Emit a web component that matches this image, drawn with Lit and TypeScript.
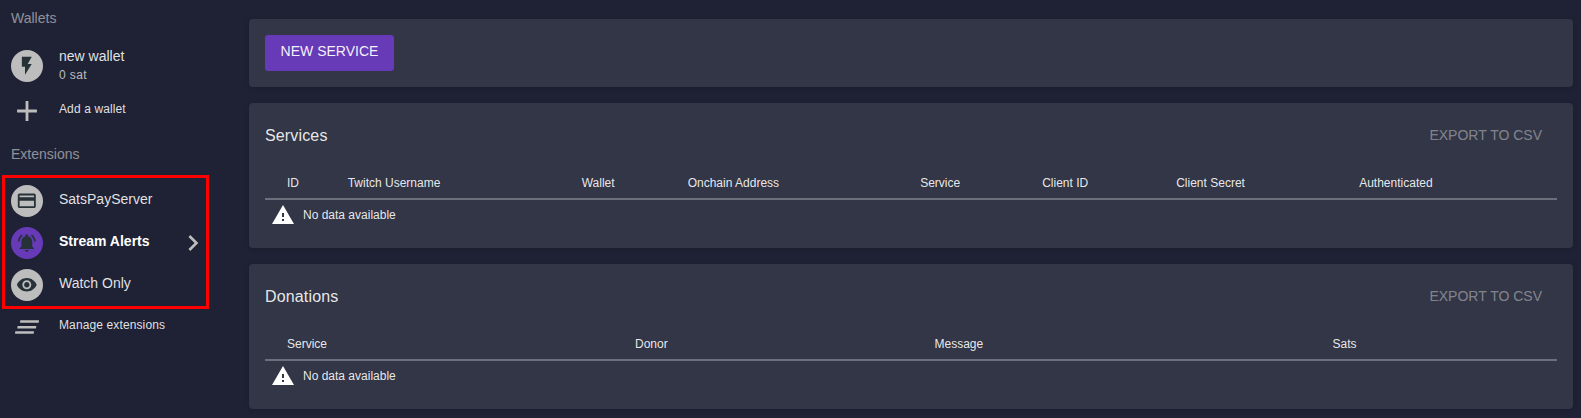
import { LitElement, html, css, svg } from "lit";
import { customElement } from "lit/decorators.js";

const P = {
  bolt: "M6.500 2v11h3.500v9l7.500-12h-4.500l4.500-8z",
  card: "M20 4H4c-1.11 0-1.99.89-1.99 2L2 18c0 1.11.89 2 2 2h16c1.11 0 2-.89 2-2V6c0-1.11-.89-2-2-2zm0 14H4v-6h16v6zm0-10H4V6h16v2z",
  bell: "M7.58 4.08L6.15 2.65C3.75 4.48 2.17 7.3 2.03 10.5h2c.15-2.65 1.51-4.97 3.55-6.42zm12.39 6.42h2c-.15-3.2-1.73-6.02-4.12-7.85l-1.42 1.43c2.02 1.45 3.39 3.77 3.54 6.42zM18 11c0-3.07-1.64-5.64-4.5-6.32V4c0-.83-.67-1.5-1.5-1.5s-1.5.67-1.5 1.5v.68C7.63 5.36 6 7.92 6 11v5l-2 2v1h16v-1l-2-2v-5zm-6 11c.14 0 .27-.01.4-.04.65-.14 1.18-.58 1.44-1.18.1-.24.15-.5.15-.78h-4c.01 1.1.9 2 2.01 2z",
  eye: "M12 4.5C7 4.5 2.73 7.61 1 12c1.73 4.39 6 7.5 11 7.5s9.27-3.11 11-7.5c-1.73-4.39-6-7.5-11-7.5zM12 17c-2.76 0-5-2.24-5-5s2.24-5 5-5 5 2.24 5 5-2.24 5-5 5zm0-8c-1.66 0-3 1.34-3 3s1.34 3 3 3 3-1.34 3-3-1.34-3-3-3z",
  warn: "M1 21h22L12 2 1 21zm12-3h-2v-2h2v2zm0-4h-2v-4h2v4z",
  chev: "M10 6L8.59 7.41 13.17 12l-4.58 4.59L10 18l6-6z",
  add: "M19 13h-6v6h-2v-6H5v-2h6V5h2v6h6v2z",
};
const icon = (d: string, cls = "") => html`<svg class="ic ${cls}" viewBox="0 0 24 24"><path d=${d}></path></svg>`;

@customElement("app-root")
export class AppRoot extends LitElement {
  static styles = css`
    :host { display: flex; width: 1581px; height: 418px; overflow: hidden; background: #1f2234; font-family: "Liberation Sans", Arial, sans-serif; color: #fff; }
    .side { width: 249px; flex: none; display: flex; flex-direction: column; }
    .label { height: 36px; padding-left: 11px; display: flex; align-items: center; font-size: 14px; color: rgba(255,255,255,.5); flex: none; }
    .row { height: 42px; flex: none; display: flex; align-items: center; position: relative; font-size: 14px; color: rgba(255,255,255,.88); }
    .wallet { height: 46px; margin-top: 7px; }
    .tool { height: 30px; font-size: 12px; letter-spacing: .12px; }
    .add { margin-top: 6px; }
    .add .lead { margin-top: 2px; }
    .add .lbl { margin-top: -2px; }
    .manage { margin-top: 1px; }
    .lead { width: 32px; height: 32px; margin-left: 11px; margin-right: 16px; flex: none; display: flex; align-items: center; justify-content: center; border-radius: 50%; background: #bdbdbd; }
    .lead.plain { background: none; }
    .lead.purple { background: #673ab7; }
    .ic { width: 21.6px; height: 21.6px; fill: #263238; display: block; }
    .stack { display: flex; flex-direction: column; padding-bottom: 2px; line-height: 21px; }
    .sub { font-size: 12px; color: rgba(255,255,255,.7); line-height: 17px; letter-spacing: .4px; }
    .t { margin-top: -4px; }
    .plus { width: 34px; height: 34px; fill: #bdbdbd; flex: none; display: block; }
    .bars { width: 26px; height: 26px; fill: #bdbdbd; display: block; flex: none; }
    .bold { font-weight: 700; color: #fff; }
    .chev { position: absolute; left: 172px; top: 5px; width: 32px; height: 32px; fill: #bdbdbd; }
    .ext { margin-top: 11px; }
    .box { width: 207px; box-sizing: border-box; margin: 3px 0 0 2px; border: 3px solid #f00; padding-top: 2px; flex: none; }
    .box .lead { margin-left: 6px; }
    .main { flex: 1; padding: 19px 8px 0 0; display: flex; flex-direction: column; gap: 16px; }
    .card { background: #333646; border-radius: 4px; box-shadow: 0 1px 5px rgba(0,0,0,.2); flex: none; }
    .top { height: 68px; box-sizing: border-box; padding: 16px; }
    .btn { width: 129px; height: 36px; padding: 0 0 4px; background: #673ab7; border: 0; border-radius: 3px; color: rgba(255,255,255,.95); font: 14px "Liberation Sans", Arial, sans-serif; display: flex; align-items: center; justify-content: center; }
    .panel { height: 145px; box-sizing: border-box; padding: 0 16px; }
    .head { height: 64px; display: flex; align-items: center; justify-content: space-between; }
    .title { font-size: 16px; color: rgba(255,255,255,.9); letter-spacing: .15px; margin-top: 2px; }
    .export { font-size: 14px; color: rgba(255,255,255,.4); margin-right: 15px; }
    .cols { display: grid; height: 31px; align-items: center; font-size: 12px; border-bottom: 2px solid #6d6f7c; padding-left: 22px; color: rgba(255,255,255,.9); }
    .cols span { margin-top: 1px; }
    .svc { grid-template-columns: 60.7px 234px 106px 232.5px 122px 134px 183px 1fr; }
    .don { grid-template-columns: 348px 299.5px 398px 1fr; }
    .empty { display: flex; align-items: center; height: 30px; font-size: 12px; padding-left: 6px; color: rgba(255,255,255,.9); }
    .warn { width: 24px; height: 24px; fill: #fff; margin-right: 8px; }
  `;

  private table(title: string, cls: string, cols: string[]) {
    return html`<section class="card panel">
      <div class="head"><span class="title">${title}</span><span class="export">EXPORT TO CSV</span></div>
      <div class="cols ${cls}">${cols.map((c) => html`<span>${c}</span>`)}</div>
      <div class="empty">${icon(P.warn, "warn")}<span>No data available</span></div>
    </section>`;
  }

  render() {
    return html`
      <aside class="side">
        <div class="label">Wallets</div>
        <div class="row wallet">
          <span class="lead">${icon(P.bolt)}</span>
          <span class="stack"><span>new wallet</span><span class="sub">0 sat</span></span>
        </div>
        <div class="row tool add">
          <span class="lead plain"><svg class="plus" viewBox="0 0 24 24"><path d=${P.add}></path></svg></span>
          <span class="lbl">Add a wallet</span>
        </div>
        <div class="label ext">Extensions</div>
        <div class="box">
          <div class="row"><span class="lead">${icon(P.card)}</span><span class="t">SatsPayServer</span></div>
          <div class="row bold"><span class="lead purple">${icon(P.bell)}</span><span class="t">Stream Alerts</span>
            <svg class="chev" viewBox="0 0 24 24"><path d=${P.chev}></path></svg></div>
          <div class="row"><span class="lead">${icon(P.eye)}</span><span class="t">Watch Only</span></div>
        </div>
        <div class="row tool manage">
          <span class="lead plain"><svg class="bars" viewBox="0 0 26 26">
            ${svg`<path d="M6.300 8.200H25l-.3 2.600H6zM3.600 13.900h18.700l-.3 2.600H3.300zM1.300 19.200H20l-.3 2.600H1z"></path>`}
          </svg></span>
          <span>Manage extensions</span>
        </div>
      </aside>
      <main class="main">
        <section class="card top"><button class="btn">NEW SERVICE</button></section>
        ${this.table("Services", "svc", ["ID", "Twitch Username", "Wallet", "Onchain Address", "Service", "Client ID", "Client Secret", "Authenticated"])}
        ${this.table("Donations", "don", ["Service", "Donor", "Message", "Sats"])}
      </main>
    `;
  }
}
